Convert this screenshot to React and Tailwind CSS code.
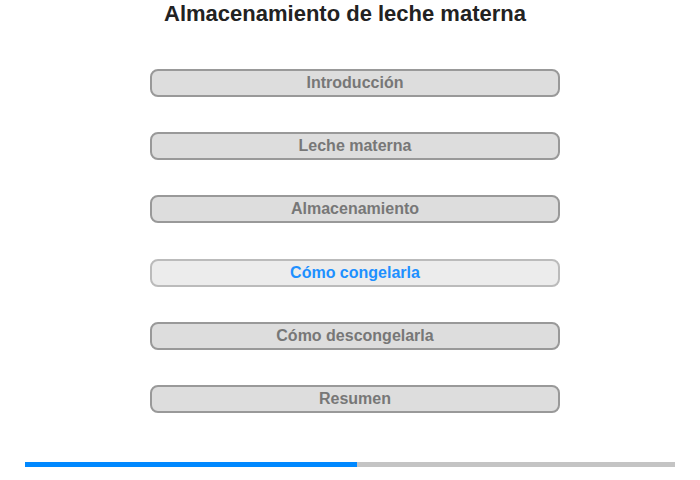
import React from "react";

const items = [
  "Introducción",
  "Leche materna",
  "Almacenamiento",
  "Cómo congelarla",
  "Cómo descongelarla",
  "Resumen",
];

export default function App() {
  const active = 3;
  return (
    <div
      className="w-[700px] h-[480px] bg-white flex flex-col items-center"
      style={{ fontFamily: '"Liberation Sans", Arial, sans-serif' }}
    >
      <h1 className="mr-[10px] mt-[1px] text-[22px] leading-[26px] font-bold text-[#222]">
        Almacenamiento de leche materna
      </h1>
      <div className="ml-[10px] mt-[42px] flex flex-col gap-[35.2px]">
        {items.map((label, i) =>
          i === active ? (
            <div
              key={label}
              className="w-[410px] h-[28px] rounded-[8px] border-2 border-[#bbbbbb] bg-[#ececec] flex items-center justify-center text-[16px] font-bold text-[#1e90ff]"
            >
              {label}
            </div>
          ) : (
            <div
              key={label}
              className="w-[410px] h-[28px] rounded-[8px] border-2 border-[#999999] bg-[#dddddd] flex items-center justify-center text-[16px] font-bold text-[#777777]"
            >
              {label}
            </div>
          )
        )}
      </div>
      <div className="mt-[49px] w-[650px] h-[5px] flex">
        <div className="w-[332px] bg-[#0088ff]" />
        <div className="flex-1 bg-[#c4c4c4]" />
      </div>
    </div>
  );
}
